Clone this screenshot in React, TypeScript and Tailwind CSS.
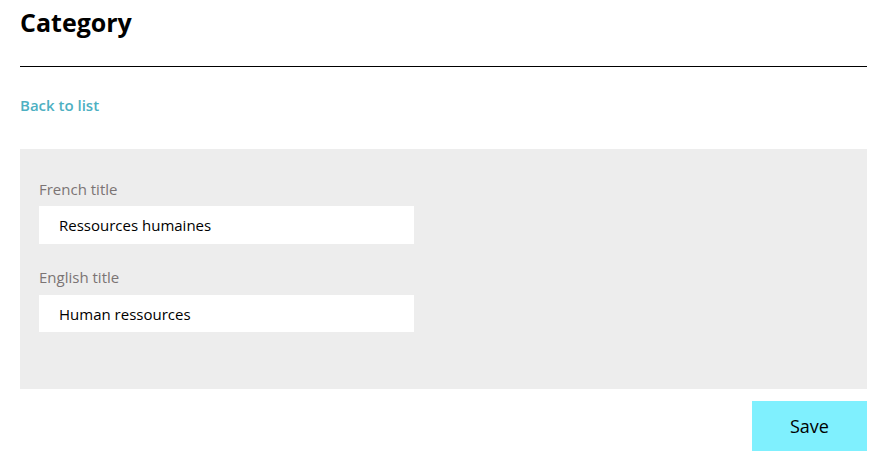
import { useState } from 'react'

export default function App() {
    const [frTitle, setFrTitle] = useState('Ressources humaines')
    const [enTitle, setEnTitle] = useState('Human ressources')

    return (
        <div className="pl-5 pr-4 font-['Open_Sans',sans-serif] text-black bg-white">
            {/* Header */}
            <h1 className="text-[25px] font-bold leading-[44px] pb-[22px] border-b border-black">Category</h1>

            <div className="pt-[26px] pb-[32px]">
                <a href="#" className="text-[15px] font-semibold text-[#4db0c2] leading-[21px]">Back to list</a>
            </div>

            {/* Form */}
            <div className="bg-[#ededed] px-[19px] pt-[30px] h-[240px]">
                <label className="block text-[15px] text-[#7b7474] leading-[20px] mb-[7px]">French title</label>
                <input
                    value={frTitle}
                    onChange={(e) => setFrTitle(e.target.value)}
                    className="block w-[375px] h-[38px] bg-white px-5 text-[15px] text-black outline-none"
                />

                <label className="block text-[15px] text-[#7b7474] leading-[20px] mt-[23px] mb-[8px]">English title</label>
                <input
                    value={enTitle}
                    onChange={(e) => setEnTitle(e.target.value)}
                    className="block w-[375px] h-[37px] bg-white px-5 text-[15px] text-black outline-none"
                />
            </div>

            <div className="flex justify-end pt-3">
                <button className="w-[115px] h-[50px] bg-[#7ff0fe] text-[18px] text-black">Save</button>
            </div>
        </div>
    )
}
